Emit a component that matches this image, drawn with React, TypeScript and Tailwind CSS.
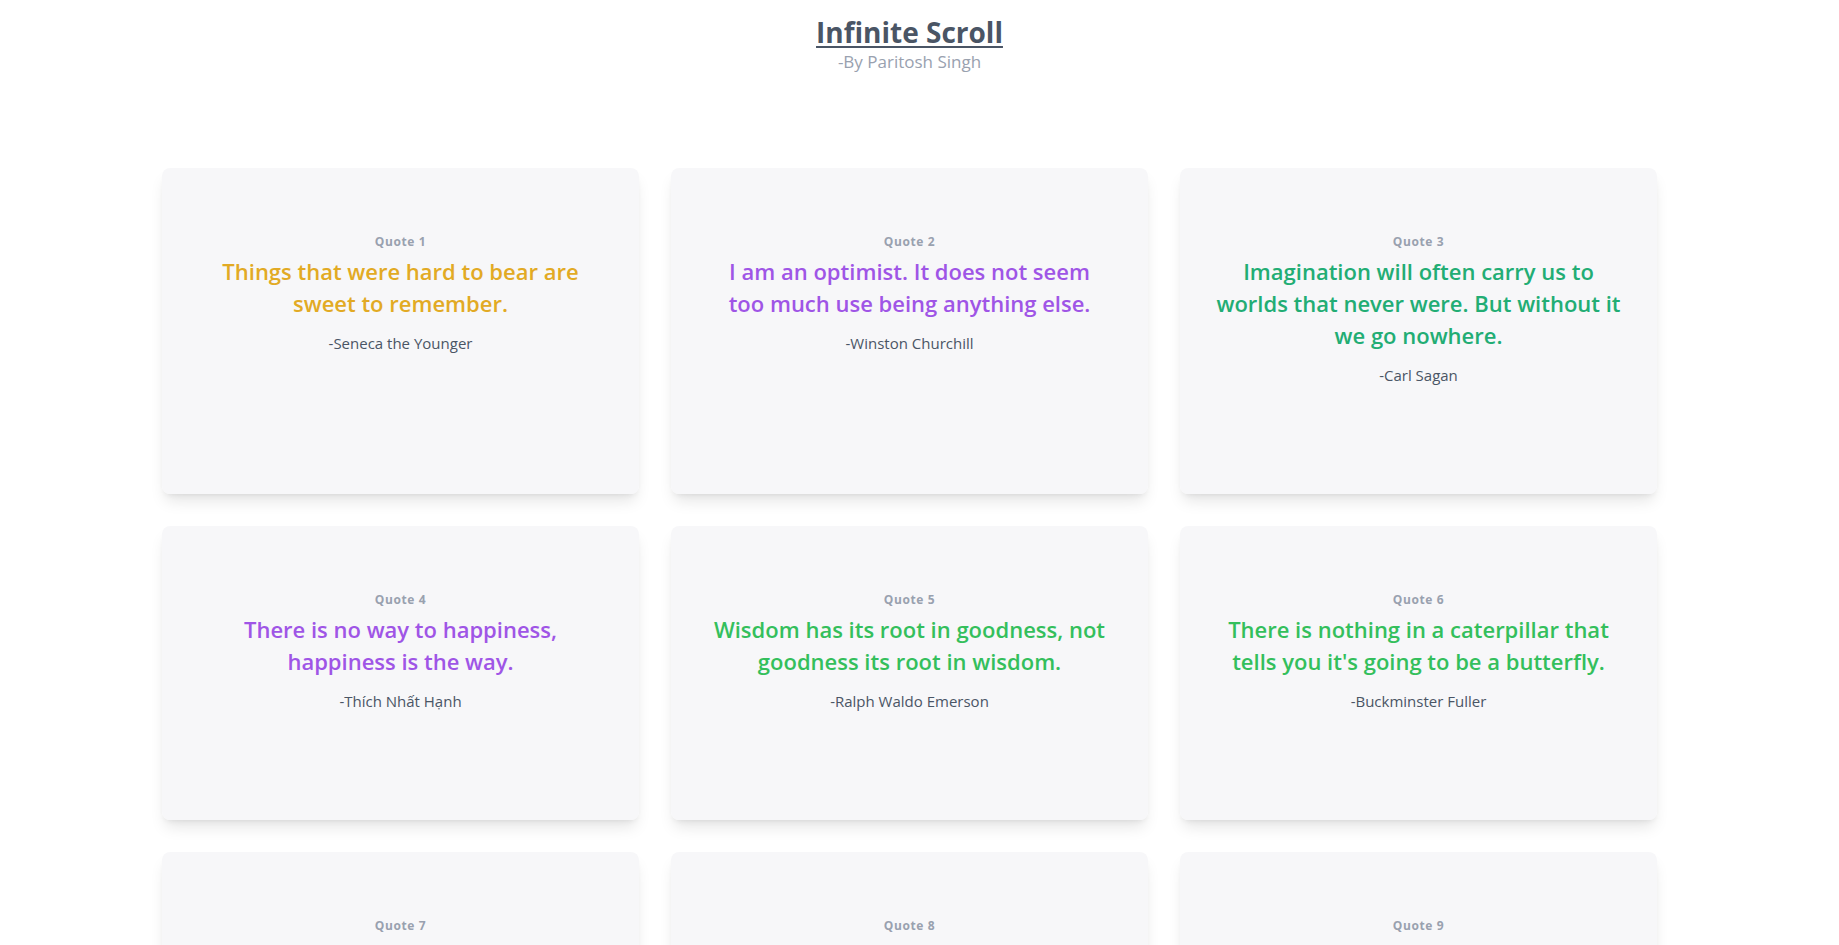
import React from "react";

type Quote = {
  text: string;
  author: string;
  color: string;
  balance?: boolean;
};

const quotes: Quote[] = [
  { text: "Things that were hard to bear are sweet to remember.", author: "Seneca the Younger", color: "text-[#e2aa24]" },
  { text: "I am an optimist. It does not seem too much use being anything else.", author: "Winston Churchill", color: "text-[#9f55e6]", balance: true },
  { text: "Imagination will often carry us to worlds that never were. But without it we go nowhere.", author: "Carl Sagan", color: "text-[#22ad74]" },
  { text: "There is no way to happiness, happiness is the way.", author: "Thích Nhất Hạnh", color: "text-[#9f55e6]" },
  { text: "Wisdom has its root in goodness, not goodness its root in wisdom.", author: "Ralph Waldo Emerson", color: "text-[#34bf5c]" },
  { text: "There is nothing in a caterpillar that tells you it's going to be a butterfly.", author: "Buckminster Fuller", color: "text-[#34bf5c]" },
  { text: "The best way out is always through.", author: "Robert Frost", color: "text-[#e2aa24]" },
  { text: "Well done is better than well said.", author: "Benjamin Franklin", color: "text-[#22ad74]" },
  { text: "It always seems impossible until it's done.", author: "Nelson Mandela", color: "text-[#9f55e6]" },
];

const QuoteCard = ({ quote, index }: { quote: Quote; index: number }) => (
  <div className="bg-gray-100/70 rounded-lg shadow-lg px-8 pt-[66px] pb-[107px] text-center">
    <p className="text-xs font-bold tracking-wider text-gray-400 leading-4 mb-[5px]">Quote {index + 1}</p>
    <p className={`text-[22px] font-semibold leading-8 ${quote.balance ? "text-balance" : ""} ${quote.color}`}>
      {quote.text}
    </p>
    <p className="mt-3 text-[15px] leading-6 text-gray-600">-{quote.author}</p>
  </div>
);

export default function App() {
  return (
    <div className="min-h-screen bg-white pr-5" style={{ fontFamily: "'Open Sans', 'Noto Sans', sans-serif" }}>
      <header className="pt-[14px] text-center">
        <h1 className="text-[28px] leading-9 font-bold text-gray-600 underline underline-offset-[3px] decoration-2">
          Infinite Scroll
        </h1>
        <p className="text-[17px] leading-6 text-gray-400">-By Paritosh Singh</p>
      </header>

      <main className="mx-auto mt-[94px] grid w-[1495px] grid-cols-3 gap-8 pb-16">
        {quotes.map((q, i) => (
          <QuoteCard key={i} quote={q} index={i} />
        ))}
      </main>
    </div>
  );
}
